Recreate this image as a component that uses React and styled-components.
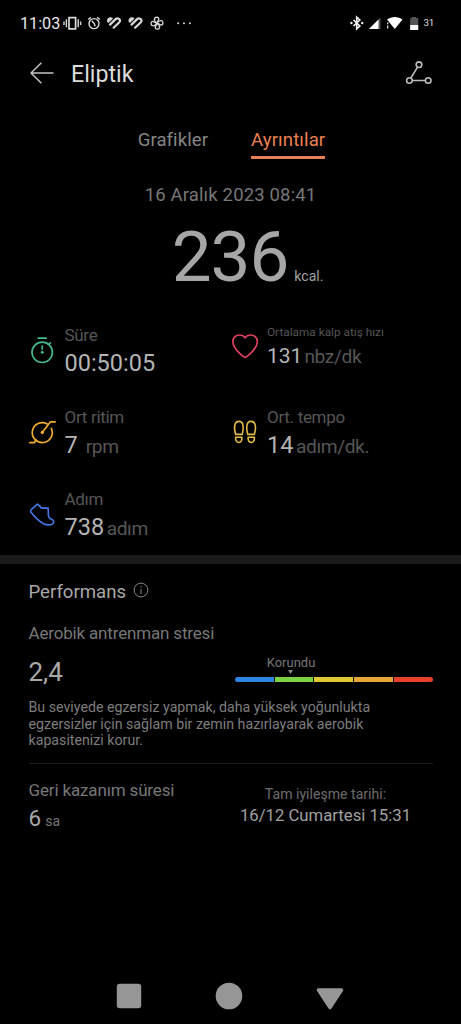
import React from 'react';
import styled, { createGlobalStyle } from 'styled-components';

const Global = createGlobalStyle`
  * { box-sizing: border-box; }
  body { margin: 0; background: #000; font-family: Roboto, "Liberation Sans", sans-serif; }
  svg { display: block; flex: none; }
`;

const Screen = styled.div`
  width: 461px;
  height: 1024px;
  background: #000;
  display: flex;
  flex-direction: column;
  overflow: hidden;
`;

const Text = styled.span`
  display: block;
  white-space: nowrap;
  font-size: ${(p) => p.$size}px;
  line-height: ${(p) => p.$line}px;
  letter-spacing: ${(p) => p.$track || 0}px;
  color: ${(p) => p.$color};
`;

const StatusBar = styled.header`
  height: 46px;
  padding: 0 27px 0 20px;
  display: flex;
  align-items: center;
  justify-content: space-between;
`;

const StatusGroup = styled.div`
  display: flex;
  align-items: center;
  gap: ${(p) => p.$gap}px;
`;

const TitleBar = styled.div`
  height: 56px;
  padding: 0 28px 0 29px;
  display: flex;
  align-items: center;
`;

const Title = styled.h1`
  margin: 0 auto 0 14px;
  font-size: 23.2px;
  font-weight: 400;
  line-height: 58px;
  color: #dcdcdc;
`;

const Tabs = styled.nav`
  padding-top: 26px;
  display: flex;
  justify-content: center;
  gap: 43px;
  height: 57px;
  margin-left: 2px;
`;

const Tab = styled.div`
  height: 31px;
  font-size: 18.6px;
  line-height: 24px;
  letter-spacing: ${(p) => (p.$active ? 0.1 : 0.05)}px;
  color: ${(p) => (p.$active ? '#ec8050' : '#858585')};
  border-bottom: ${(p) => (p.$active ? '3px solid #e87f57' : '3px solid transparent')};
  border-radius: 1px;
`;

const Summary = styled.section`
  padding-top: 24px;
  height: 166px;
  display: flex;
  flex-direction: column;
  align-items: center;
  gap: 14px;
`;

const Calories = styled.div`
  display: flex;
  align-items: baseline;
  gap: 6px;
  margin-left: 34px;
`;

const Metrics = styled.section`
  display: grid;
  grid-template-columns: 202.5px 1fr;
  grid-template-rows: 82px 82px 66px;
  padding-left: 28px;
`;

const Metric = styled.div`
  display: flex;
  gap: 8.5px;
  svg { margin-top: ${(p) => (p.$compact ? 7 : 11)}px; }
`;

const MetricBody = styled.div`
  display: flex;
  flex-direction: column;
  gap: ${(p) => (p.$compact ? 4 : 5)}px;
`;

const ValueRow = styled.div`
  display: flex;
  align-items: baseline;
  gap: ${(p) => p.$gap || 3}px;
`;

const Band = styled.div`
  height: 9px;
  flex: none;
  background: #1b1b1b;
`;

const Performance = styled.section`
  padding: 16px 28.5px 0;
`;

const SectionTitle = styled.div`
  display: flex;
  gap: 7px;
  margin-bottom: 19px;
  svg { margin-top: 2px; }
`;

const StressRow = styled.div`
  display: flex;
  justify-content: space-between;
  margin-top: 12px;
  height: 32px;
`;

const Scale = styled.div`
  width: 197.5px;
`;

const Marker = styled.div`
  width: 49px;
  margin-left: 31.5px;
  display: flex;
  flex-direction: column;
  align-items: center;
  svg { margin: 0 7px 3px 6px; }
`;

const ScaleBar = styled.div`
  display: flex;
  gap: 1px;
  border-radius: 2.5px;
  overflow: hidden;
`;

const Segment = styled.div`
  flex: 1;
  height: 5px;
  background: ${(p) => p.$color};
`;

const Description = styled.p`
  margin: 12px 0 0;
  font-size: 14.2px;
  line-height: 16.5px;
  color: #7d7d7d;
  white-space: nowrap;
`;

const Rule = styled.div`
  height: 1px;
  margin: 14px 0 16px;
  background: #1c1c1c;
`;

const Recovery = styled.div`
  display: flex;
  justify-content: space-between;
`;

const RecoveryTime = styled.div`
  display: flex;
  flex-direction: column;
  gap: 5px;
`;

const RecoveryDate = styled.div`
  width: 181px;
  margin: 5px 16.5px 0 0;
  display: flex;
  flex-direction: column;
  align-items: center;
  gap: 3px;
`;

const SystemNav = styled.footer`
  margin-top: auto;
  height: 56px;
  padding: 0 80.5px 0 78.5px;
  display: grid;
  grid-template-columns: repeat(3, 1fr);
  place-items: center;
`;

const LeftStatusIcons = () => (
  <svg width="134" height="18" viewBox="62 14 134 18" fill="none" stroke="#d8d8d8">
    <path d="M69 17.6h6.6v11.2H69z" strokeWidth="1.7" />
    <path d="M66.4 19.2v8M78.2 19.2v8M64 21.5v3.4M80.6 21.5v3.4" strokeWidth="1.4" />
    <circle cx="94" cy="23.600" r="5" strokeWidth="1.4" />
    <path d="M88.200 19.600l2.700-2.400M99.800 19.600l-2.700-2.400M91.800 20.800l2.500 2.800.8 2.600" strokeWidth="1.4" />
    {[0, 21.5].map((dx) => (
      <g key={dx} transform={`translate(${dx} 0)`}>
        <path d="M107 20.900c0-3 2.700-4.300 5-3.100l1.100.8-4.400 4.200c-1-.3-1.700-1-1.700-1.900z" fill="#d8d8d8" stroke="none" />
        <path d="M110 24.600l5.600-5.500c1.700-1.600 4.900-.3 4.300 2.200-.1.400-.4.800-.8 1.200l-5.500 5.200" strokeWidth="2.200" strokeLinecap="round" />
      </g>
    ))}
    <g strokeWidth="1.35">
      {[0, 90, 180, 270].map((r) => (
        <path key={r} transform={`rotate(${r} 157 23.2)`} d="M157 23.200c-1.700-1.100-3-2.700-2.500-4.500.6-1.900 4.100-1.900 4.300.1.100 1.400-1.100 1.500-1.800 4.400z" />
      ))}
    </g>
    <g fill="#d8d8d8" stroke="none">
      <circle cx="178.200" cy="23.300" r="1" />
      <circle cx="184" cy="23.300" r="1" />
      <circle cx="189.900" cy="23.300" r="1" />
    </g>
  </svg>
);

const RightStatusIcons = () => (
  <svg width="70" height="18" viewBox="349 14 70 18" fill="none">
    <path d="M353.500 20l6.300 6-3.100 2.900v-11.800l3.100 2.900-6.300 6" stroke="#eee" strokeWidth="1.700" />
    <circle cx="351.400" cy="23" r="1.200" fill="#eee" />
    <circle cx="362.200" cy="23" r="1.200" fill="#eee" />
    <path d="M369 29l11.500-11.500V29z" fill="#555" />
    <path d="M369 29l9.500-9.500V29z" fill="#fff" />
    <path d="M387 19.600c4.600-3.600 11-3.600 15.500 0L394.800 29z" fill="#fff" />
    <path d="M387.700 22.500v1.800M387.700 25.600v3" stroke="#ddd" strokeWidth="1.300" />
    <path d="M410.200 18h1.800v-1h4v1h2.200v12h-8z" fill="#555" />
    <path d="M410.200 25h8v5h-8z" fill="#fff" />
  </svg>
);

const BackIcon = () => (
  <svg width="28" height="28" viewBox="29 60 28 28" fill="none" stroke="#c4c4c4" strokeWidth="1.500" strokeLinejoin="round">
    <path d="M53.500 73H31M41.400 62.800L31 73l10.400 10.200" />
  </svg>
);

const RouteIcon = () => (
  <svg width="28" height="28" viewBox="405 60 28 28" fill="none" stroke="#bcbcbc" strokeWidth="1.600">
    <circle cx="419" cy="64.700" r="2.800" />
    <circle cx="409.400" cy="80.500" r="2.800" />
    <circle cx="428.200" cy="80.500" r="2.800" />
    <path d="M417.500 67.100l-6.600 11M412.200 80.500h13.200" />
  </svg>
);

const TimerIcon = () => (
  <svg width="28" height="28" viewBox="28 336 28 28" fill="none" stroke="#43b98d" strokeWidth="1.700" strokeLinecap="round">
    <circle cx="42.200" cy="352.300" r="10.200" />
    <path d="M38.200 338.200h8M49.300 343.800l1.100-1M42.200 346v3" />
    <circle cx="42.200" cy="352.300" r="1.100" fill="#43b98d" strokeWidth="1" />
  </svg>
);

const CadenceIcon = () => (
  <svg width="28" height="28" viewBox="28 418 28 28" fill="none" stroke="#efab32" strokeWidth="1.700" strokeLinecap="round" strokeLinejoin="round">
    <path d="M47.200 423.900A10 10 0 1 0 51.300 428.300" />
    <path d="M42.400 432.300L50.500 421.800H55.200M29.800 442.600h4.600l1.500-2.600" />
    <circle cx="42.300" cy="432.400" r="1.300" fill="#efab32" strokeWidth="1" />
  </svg>
);

const HeartIcon = () => (
  <svg width="28" height="28" viewBox="230.500 332 28 28" fill="none" stroke="#dc4260" strokeWidth="1.700" strokeLinejoin="round">
    <path d="M244.600 357.300c-1.200 0-11.900-7.900-12.200-15.300-.2-4.400 2.900-7 6.300-7 2.600 0 4.700.9 5.900 2.900 1.200-2 3.300-2.900 5.900-2.900 3.400 0 6.500 2.600 6.300 7-.3 7.400-11 15.300-12.200 15.300z" />
  </svg>
);

const StepsIcon = () => (
  <svg width="28" height="28" viewBox="230.500 418 28 28" fill="none" stroke="#dfb84a" strokeWidth="1.600" strokeLinejoin="round">
    {[
      'M235.200 434.400c-1.100-3.400-1.500-7.100-.8-9.800 1-4.100 6.800-4.400 7.900-.3.700 2.900.5 6.700-.6 10.100z',
      'M235.100 437.200h6.300c.4 3.100-.8 5.200-3 5.300-2.200.1-3.500-2-3.300-5.300z',
    ].map((d) => (
      <g key={d}>
        <path d={d} />
        <path d={d} transform="translate(489 0) scale(-1 1)" />
      </g>
    ))}
  </svg>
);

const ShoeIcon = () => (
  <svg width="28" height="28" viewBox="28 500 28 28" fill="none" stroke="#4677e8" strokeWidth="1.600" strokeLinejoin="round">
    <path d="M37.400 504.200L31.200 509.700c-.8.800-.8 1.800 0 2.800 3.700 4.700 7.400 8.400 12.300 11.200 3 1.300 6.500 1.300 8.800.5 1.900-1.300 1.900-3.700-.2-4.600-2.600-.8-3.900-3.100-3.800-5.800.1-2-.2-3.800-.1-5.700h-5.200c-1.800 0-2.600-.8-3.300-2.100z" />
  </svg>
);

const InfoIcon = () => (
  <svg width="16" height="16" viewBox="0 0 16 16" fill="none" stroke="#888" strokeWidth="1">
    <circle cx="8" cy="8" r="6.900" />
    <path d="M8 7v5M8 4.300v1.300" />
  </svg>
);

const metrics = [
  { icon: <TimerIcon />, label: 'Süre', value: '00:50:05', size: 23.5 },
  { icon: <HeartIcon />, label: 'Ortalama kalp atış hızı', value: '131', unit: 'nbz/dk', size: 21, gap: 2, compact: true },
  { icon: <CadenceIcon />, label: 'Ort ritim', value: '7', unit: 'rpm', size: 23.5, gap: 8 },
  { icon: <StepsIcon />, label: 'Ort. tempo', value: '14', unit: 'adım/dk.', size: 23.5, gap: 2.5 },
  { icon: <ShoeIcon />, label: 'Adım', value: '738', unit: 'adım', size: 23.5, gap: 2.5 },
];

const levels = ['#2d86e4', '#7bd344', '#e0c935', '#e5a637', '#e7402b'];

export default function App() {
  return (
    <Screen>
      <Global />
      <StatusBar>
        <StatusGroup $gap={2}>
          <Text $size={16.2} $line={47} $color="#e8e8e8">11:03</Text>
          <LeftStatusIcons />
        </StatusGroup>
        <StatusGroup $gap={4.5}>
          <RightStatusIcons />
          <Text $size={9.8} $line={46} $track={-0.3} $color="#ddd">31</Text>
        </StatusGroup>
      </StatusBar>
      <TitleBar>
        <BackIcon />
        <Title>Eliptik</Title>
        <RouteIcon />
      </TitleBar>
      <Tabs>
        <Tab>Grafikler</Tab>
        <Tab $active>Ayrıntılar</Tab>
      </Tabs>
      <Summary>
        <Text $size={18.5} $line={24} $track={0.15} $color="#777">16 Aralık 2023 08:41</Text>
        <Calories>
          <Text $size={71} $line={72} $track={-1} $color="#a6a6a6">236</Text>
          <Text $size={14} $line={18} $color="#a0a0a0">kcal.</Text>
        </Calories>
      </Summary>
      <Metrics>
        {metrics.map((m) => (
          <Metric key={m.label} $compact={m.compact}>
            {m.icon}
            <MetricBody $compact={m.compact}>
              <Text $size={m.compact ? 11.8 : 17} $line={m.compact ? 14 : 20} $track={m.compact ? 0 : -0.3} $color="#565656">{m.label}</Text>
              <ValueRow $gap={m.gap}>
                <Text $size={m.size} $line={26} $color="#b4b4b4">{m.value}</Text>
                {m.unit && <Text $size={19.2} $line={26} $track={-0.4} $color="#565656">{m.unit}</Text>}
              </ValueRow>
            </MetricBody>
          </Metric>
        ))}
      </Metrics>
      <Band />
      <Performance>
        <SectionTitle>
          <Text $size={18.6} $line={24} $color="#a8a8a8">Performans</Text>
          <InfoIcon />
        </SectionTitle>
        <Text $size={17} $line={20} $track={-0.17} $color="#777">Aerobik antrenman stresi</Text>
        <StressRow>
          <Text $size={26} $line={35} $color="#a8a8a8">2,4</Text>
          <Scale>
            <Marker>
              <Text $size={13} $line={15} $color="#777">Korundu</Text>
              <svg width="5" height="4" viewBox="0 0 5 4"><path d="M0 0h5L2.500 4z" fill="#8a8a8a" /></svg>
            </Marker>
            <ScaleBar>
              {levels.map((c) => <Segment key={c} $color={c} />)}
            </ScaleBar>
          </Scale>
        </StressRow>
        <Description>
          Bu seviyede egzersiz yapmak, daha yüksek yoğunlukta<br />
          egzersizler için sağlam bir zemin hazırlayarak aerobik<br />
          kapasitenizi korur.
        </Description>
        <Rule />
        <Recovery>
          <RecoveryTime>
            <Text $size={17} $line={20} $track={-0.15} $color="#777">Geri kazanım süresi</Text>
            <ValueRow $gap={4}>
              <Text $size={22.5} $line={26} $color="#a8a8a8">6</Text>
              <Text $size={14} $line={18} $color="#777">sa</Text>
            </ValueRow>
          </RecoveryTime>
          <RecoveryDate>
            <Text $size={14.1} $line={18} $color="#6c6c6c">Tam iyileşme tarihi:</Text>
            <Text $size={16.7} $line={20} $color="#a0a0a0">16/12 Cumartesi 15:31</Text>
          </RecoveryDate>
        </Recovery>
      </Performance>
      <SystemNav>
        <svg width="26" height="26" viewBox="0 0 26 26"><rect x="0.8" y="0.8" width="24.4" height="24.4" rx="3" fill="#969696" /></svg>
        <svg width="28" height="28" viewBox="0 0 28 28"><circle cx="14" cy="14" r="13.3" fill="#969696" /></svg>
        <svg width="28" height="28" viewBox="0 0 28 28"><path d="M2.5 8h23L14 25.500z" fill="#969696" stroke="#969696" strokeWidth="3.500" strokeLinejoin="round" /></svg>
      </SystemNav>
    </Screen>
  );
}
